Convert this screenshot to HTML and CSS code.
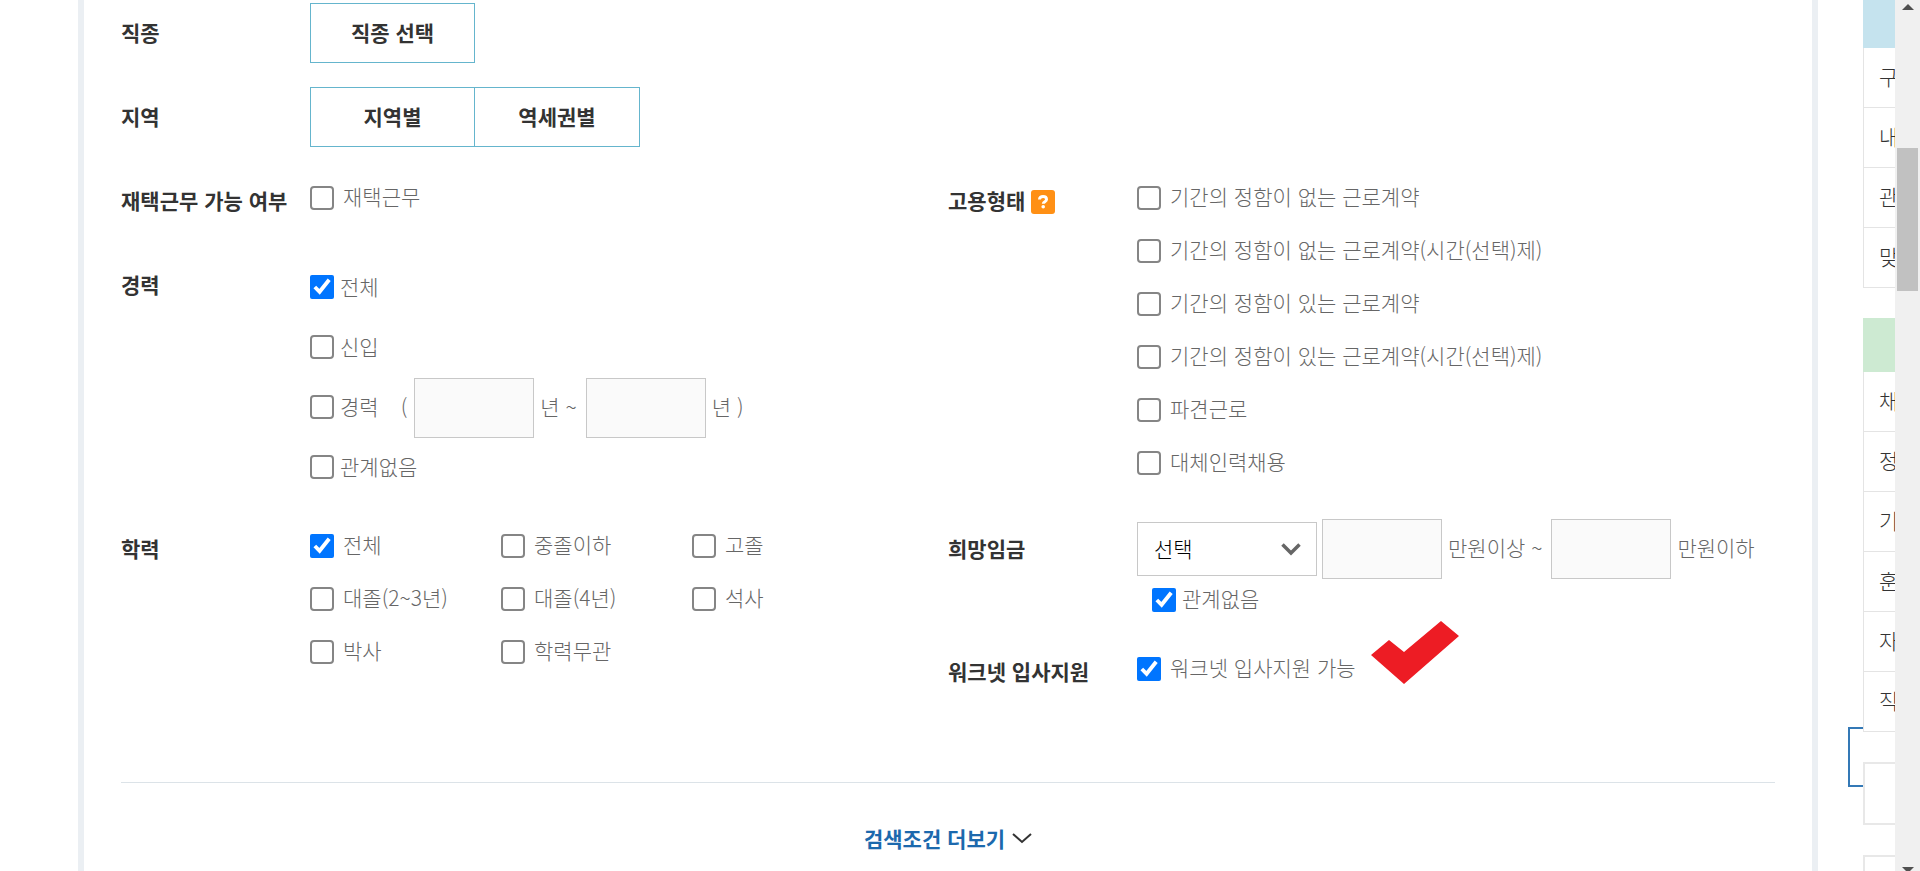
FILE: index.html
```html
<!DOCTYPE html>
<html lang="ko">
<head>
<meta charset="utf-8">
<title>채용정보 상세검색</title>
<link rel="stylesheet" href="styles.css">
</head>
<body>
<div class="page">
  <main class="main">
    <form class="panel">
      <div class="criteria">
        <div class="field field-wide">
          <span class="field-name">직종</span>
          <div class="btn-group"><button type="button" class="btn">직종 선택</button></div>
        </div>
        <div class="field field-wide">
          <span class="field-name">지역</span>
          <div class="btn-group"><button type="button" class="btn">지역별</button><button type="button" class="btn">역세권별</button></div>
        </div>
        <div class="field">
          <span class="field-name">재택근무 가능 여부</span>
          <div class="options">
            <label class="check"><input type="checkbox"><span>재택근무</span></label>
          </div>
        </div>
        <div class="field field-tall">
          <span class="field-name">고용형태
            <button type="button" class="help" aria-label="도움말"><svg viewBox="0 0 24 24" width="24" height="24"><path d="M8.500 9.500C8.500 7.500 10 6.600 12 6.600s3.500 1 3.500 2.900c0 2.300-3.200 2.100-3.200 4.200" fill="none" stroke="#fff" stroke-width="3"/><circle cx="12.200" cy="16.800" r="1.800" fill="#fff"/></svg></button>
          </span>
          <div class="options">
            <label class="check"><input type="checkbox"><span>기간의 정함이 없는 근로계약</span></label>
            <label class="check"><input type="checkbox"><span>기간의 정함이 없는 근로계약(시간(선택)제)</span></label>
            <label class="check"><input type="checkbox"><span>기간의 정함이 있는 근로계약</span></label>
            <label class="check"><input type="checkbox"><span>기간의 정함이 있는 근로계약(시간(선택)제)</span></label>
            <label class="check"><input type="checkbox"><span>파견근로</span></label>
            <label class="check"><input type="checkbox"><span>대체인력채용</span></label>
          </div>
        </div>
        <div class="field">
          <span class="field-name">경력</span>
          <div class="career">
            <label class="check check-line"><input type="checkbox" checked><span>전체</span></label>
            <label class="check check-line"><input type="checkbox"><span>신입</span></label>
            <div class="range">
              <label class="check check-line"><input type="checkbox"><span>경력</span></label>
              <span class="paren">(</span>
              <input type="text" class="box" aria-label="최소 경력 년수">
              <span class="unit">년 ~</span>
              <input type="text" class="box" aria-label="최대 경력 년수">
              <span class="unit">년 )</span>
            </div>
            <label class="check check-line"><input type="checkbox"><span>관계없음</span></label>
          </div>
        </div>
        <div class="field field-tall">
          <span class="field-name">학력</span>
          <div class="options options-grid">
            <label class="check"><input type="checkbox" checked><span>전체</span></label>
            <label class="check"><input type="checkbox"><span>중졸이하</span></label>
            <label class="check"><input type="checkbox"><span>고졸</span></label>
            <label class="check"><input type="checkbox"><span>대졸(2~3년)</span></label>
            <label class="check"><input type="checkbox"><span>대졸(4년)</span></label>
            <label class="check"><input type="checkbox"><span>석사</span></label>
            <label class="check"><input type="checkbox"><span>박사</span></label>
            <label class="check"><input type="checkbox"><span>학력무관</span></label>
          </div>
        </div>
        <div class="field">
          <span class="field-name">희망임금</span>
          <div class="wage">
            <div class="range">
              <div class="select">
                <select aria-label="임금 단위"><option>선택</option></select>
                <svg class="select-arrow" viewBox="0 0 20 13" width="20" height="13"><path d="M1.500 1.500 10 10l8.500-8.500" fill="none" stroke="#666" stroke-width="3.500"/></svg>
              </div>
              <input type="text" class="box" aria-label="최소 임금">
              <span class="unit">만원이상 ~</span>
              <input type="text" class="box" aria-label="최대 임금">
              <span class="unit">만원이하</span>
            </div>
            <label class="check check-any"><input type="checkbox" checked><span>관계없음</span></label>
          </div>
        </div>
        <div class="field">
          <span class="field-name">워크넷 입사지원</span>
          <div class="options">
            <label class="check check-marked"><input type="checkbox" checked><span>워크넷 입사지원 가능</span>
              <svg class="mark" viewBox="0 0 88 63" width="88" height="63"><path d="M0 34 18 19 33 31 70 0 88 15 33 63Z" fill="#ed1c24"/></svg>
            </label>
          </div>
        </div>
      </div>
      <div class="more">
        <button type="button" class="more-btn">검색조건 더보기<svg viewBox="0 0 20 11" width="20" height="11"><path d="M1 1l9 8 9-8" fill="none" stroke="#333" stroke-width="2"/></svg></button>
      </div>
    </form>
  </main>
  <div class="focus-box"></div>
  <aside class="quick">
    <div class="quick-head quick-head-blue"></div>
    <ul class="quick-list">
      <li><a href="#">구</a></li><li><a href="#">내</a></li><li><a href="#">관</a></li><li><a href="#">맞</a></li>
    </ul>
    <div class="quick-head quick-head-green"></div>
    <ul class="quick-list">
      <li><a href="#">채</a></li><li><a href="#">정</a></li><li><a href="#">기</a></li><li><a href="#">훈</a></li><li><a href="#">자</a></li><li><a href="#">직</a></li>
    </ul>
    <div class="quick-card"></div>
    <div class="quick-card"></div>
  </aside>
  <div class="scroll">
    <svg viewBox="0 0 12 6" width="12" height="6"><path d="M0 6 6 0l6 6Z" fill="#505050"/></svg>
    <div class="scroll-track"><div class="scroll-thumb"></div></div>
    <svg viewBox="0 0 12 6" width="12" height="6"><path d="M0 0h12L6 6Z" fill="#505050"/></svg>
  </div>
</div>
</body>
</html>
```
FILE: styles.css
```css
* { box-sizing: border-box; }

body {
  margin: 0;
  overflow: hidden;
  background: #fff;
  color: #666;
  font: 300 21px/30px "Noto Sans CJK KR", "Noto Sans", sans-serif;
}

button, input, select { font: inherit; color: inherit; margin: 0; }

.page {
  position: relative;
  display: flex;
  height: 100vh;
  overflow: hidden;
}

/* search panel */
.main { flex: 1; padding: 0 45px 0 78px; }
.panel {
  min-height: 100vh;
  padding: 3px 37px 0;
  border: solid #ebeff3;
  border-width: 0 6px;
}
.criteria {
  display: grid;
  grid-template-columns: 1fr 1fr;
  row-gap: 24px;
  padding-bottom: 80px;
  border-bottom: 1px solid #dce3e8;
}
.field { display: flex; align-items: flex-start; min-width: 0; }
.field-wide { grid-column: 1 / -1; }
.field-tall { grid-row: span 2; }
.field-name {
  display: flex;
  align-items: center;
  gap: 6px;
  flex: 0 0 189px;
  height: 60px;
  padding-bottom: 2px;
  color: #333;
  font-weight: 700;
  white-space: nowrap;
}
.help {
  display: flex;
  width: 24px;
  height: 24px;
  margin-top: 4px;
  padding: 0;
  border: 0;
  border-radius: 3px;
  background: #ff9015;
}

.btn-group { display: flex; }
.btn {
  width: 165px;
  height: 60px;
  padding: 0 0 2px;
  border: 1px solid #65b5cd;
  background: #fff;
  color: #333;
  font-weight: 700;
}
.btn + .btn { width: 166px; margin-left: -1px; }

/* check boxes */
.check {
  display: flex;
  align-items: center;
  gap: 9px;
  height: 53px;
  white-space: nowrap;
}
.check input { flex: none; width: 24px; height: 24px; accent-color: #0075ff; }
.check input:not(:checked) {
  appearance: none;
  border: 2px solid #858585;
  border-radius: 4px;
  background: #fff;
}
.check span { padding-bottom: 4px; }
.check-line { height: 60px; gap: 6px; padding-bottom: 2px; }
.check-line span { padding-bottom: 2px; }
.check-any { height: 39px; gap: 6px; padding: 3px 0 0 15px; }
.check-marked { position: relative; }
.mark { position: absolute; left: 234px; top: -21px; }
.options { flex: 1; }
.options-grid { display: grid; grid-template-columns: 191px 191px 1fr; }

/* text boxes with units */
.career { height: 240px; padding-top: 3px; }
.range { display: flex; align-items: center; height: 60px; white-space: nowrap; }
.box {
  width: 120px;
  height: 60px;
  padding: 0 12px;
  border: 1px solid #c8c8c8;
  border-radius: 0;
  background: #fafafa;
}
.paren { margin: 0 7px 0 22px; padding-bottom: 4px; }
.unit { margin: 0 9px 0 6px; padding-bottom: 4px; }
.select { position: relative; margin-right: 5px; }
.select select {
  display: block;
  width: 180px;
  height: 54px;
  padding: 0 16px 2px;
  border: 1px solid #c8c8c8;
  border-radius: 0;
  background: #fff;
  color: #000;
  appearance: none;
}
.select-arrow { position: absolute; right: 16px; top: 21px; pointer-events: none; }

.more { display: flex; justify-content: center; padding-top: 40px; }
.more-btn {
  display: flex;
  align-items: center;
  gap: 7px;
  padding: 0;
  border: 0;
  background: none;
  color: #1c69ad;
  font-weight: 700;
}

/* quick menu cut by the window edge */
.focus-box {
  position: absolute;
  right: 0;
  top: 727px;
  width: 72px;
  height: 60px;
  border: 2px solid #3479b6;
}
.quick { position: relative; flex: 0 0 32px; overflow: hidden; color: #333; }
.quick-head-blue { height: 48px; background: #c5e3ee; }
.quick-head-green { height: 54px; margin-top: 30px; background: #cdead2; }
.quick-list {
  width: 200px;
  margin: 0;
  padding: 0;
  list-style: none;
  border-left: 1px solid #e4e4e4;
  background: #fff;
}
.quick-list a {
  display: block;
  height: 60px;
  padding: 13px 15px;
  border-bottom: 1px solid #e4e4e4;
  color: inherit;
  text-decoration: none;
}
.quick-card {
  width: 200px;
  height: 63px;
  margin-top: 30px;
  border: 2px solid #e8e8e8;
  background: #fff;
}

.scroll {
  position: relative;
  display: flex;
  flex: 0 0 25px;
  flex-direction: column;
  align-items: center;
  height: 100vh;
  padding-top: 4px;
  background: #f0f0f0;
}
.scroll-track { flex: 0 0 calc(100% - 10px); width: 21px; padding-top: 138px; }
.scroll-thumb { height: 143px; background: #c1c1c1; }
.scroll svg { flex: none; }
```
